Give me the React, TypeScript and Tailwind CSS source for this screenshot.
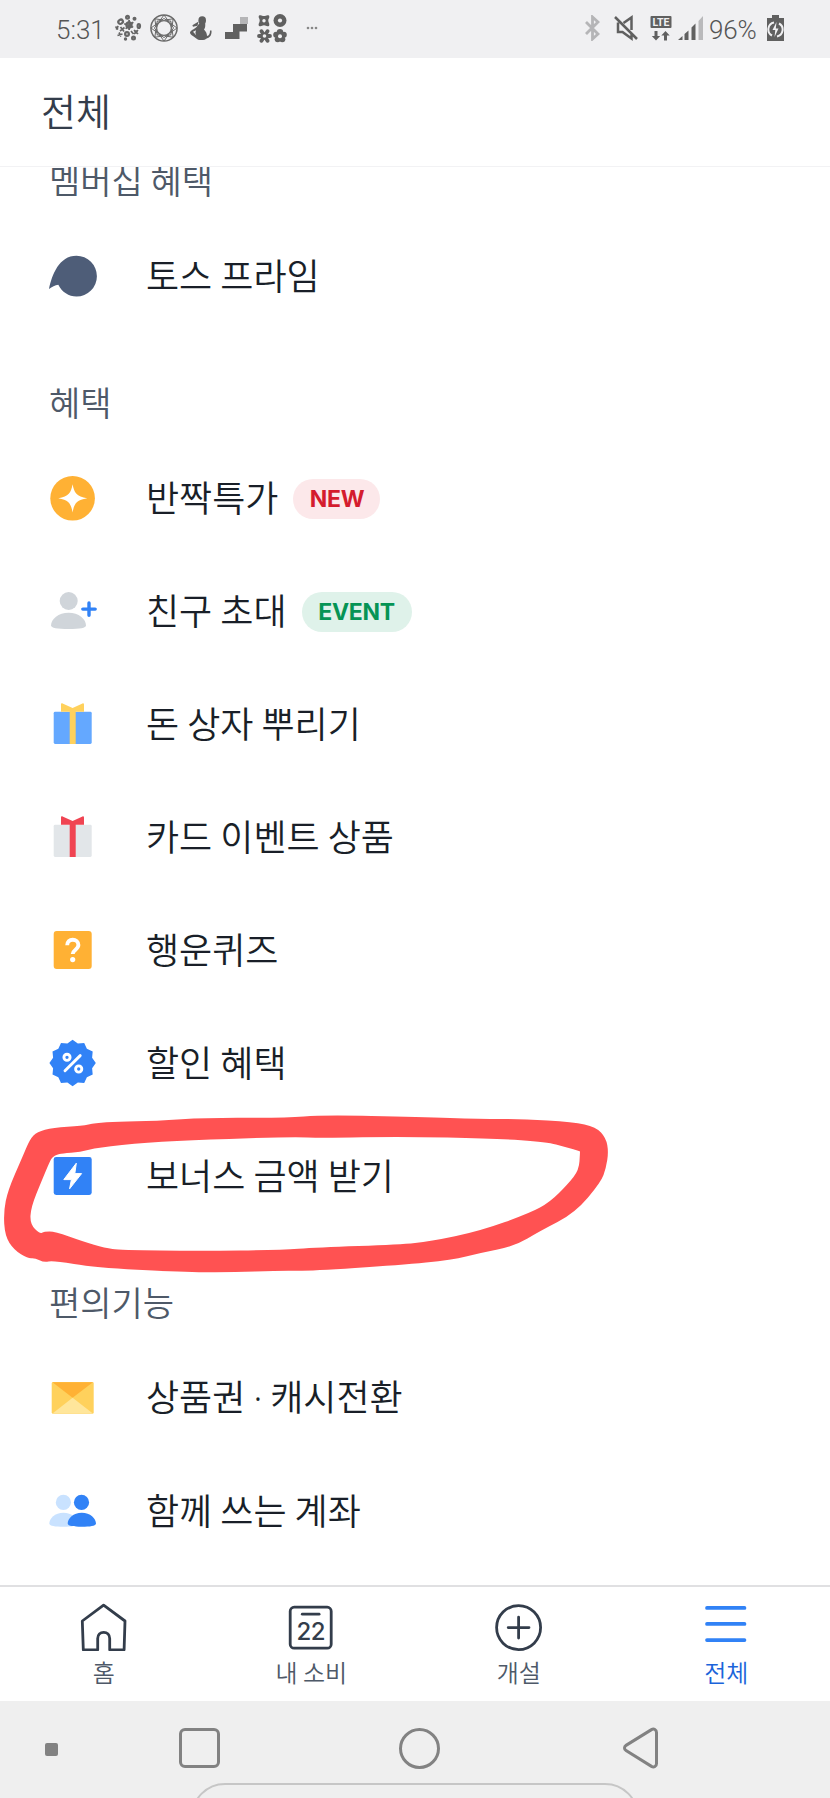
import type { ReactNode } from 'react'

const ICON = 'h-[49px] w-[49px] shrink-0'

function PrimeIcon() {
  return (
    <svg viewBox="0 0 49 49" className={ICON} fill="#4e5d78">
      <path d="M1 38C4 24 11 4.8 28.5 4.8a20.4 20.4 0 0 1 0 40.8c-7.8 0-14.6-4.6-18.2-11.8C7 34.4 4 35.8 1 38z" />
    </svg>
  )
}

function SparkIcon() {
  return (
    <svg viewBox="0 0 49 49" className={ICON}>
      <circle cx="24.6" cy="25.3" r="22.3" fill="#ffb134" />
      <path
        d="M24.6 11.3c1.6 8.6 3.8 12.2 14.6 14-10.8 1.8-13 5.4-14.6 14.1-1.6-8.7-3.8-12.3-14.3-14.1 10.5-1.8 12.7-5.4 14.3-14z"
        fill="#fff"
      />
    </svg>
  )
}

function InviteIcon() {
  return (
    <svg viewBox="0 0 49 49" className={ICON}>
      <circle cx="20.7" cy="15" r="9" fill="#d0d5da" />
      <path d="M3 39.5c0-6.5 7.5-12.8 17.6-12.8S38 33 38 39.5c0 2.4-6 3.5-17.4 3.5S3 41.9 3 39.5z" fill="#d0d5da" />
      <path d="M41 16.9v12.4M34.8 23.1h12.4" stroke="#3182f6" strokeWidth="3.4" strokeLinecap="round" />
    </svg>
  )
}

function GiftIcon({ box, ribbon }: { box: string; ribbon: string }) {
  return (
    <svg viewBox="0 0 49 49" className={ICON}>
      <rect x="5.7" y="12.8" width="38" height="32.2" rx="1.4" fill={box} />
      <path d="M13 5.4c0-.9.8-1.3 1.6-.9l10 4.4 9.9-4.4c.8-.4 1.5 0 1.5.9v7.4h-8.3V45h-6V12.8H13z" fill={ribbon} />
    </svg>
  )
}

function QuizIcon() {
  return (
    <svg viewBox="0 0 49 49" className={ICON}>
      <rect x="5.7" y="6" width="38" height="38" rx="3" fill="#ffb134" />
      <path
        d="M19.2 20.3c0-3.4 2.4-5.6 5.5-5.6s5.7 2.2 5.7 5.4c0 4.5-5.7 4.6-5.7 9"
        fill="none"
        stroke="#fff"
        strokeWidth="3.9"
      />
      <circle cx="24.7" cy="34.6" r="2.6" fill="#fff" />
    </svg>
  )
}

// 12-point starburst
const burst = Array.from({ length: 24 }, (_, i) => {
  const r = i % 2 ? 20.2 : 23.2
  const a = (i * Math.PI) / 12
  return `${24.6 + r * Math.sin(a)},${25 - r * Math.cos(a)}`
}).join(' ')

function DiscountIcon() {
  return (
    <svg viewBox="0 0 49 49" className={ICON}>
      <polygon points={burst} fill="#3182f6" />
      <g fill="none" stroke="#fff" strokeWidth="2.9">
        <circle cx="19" cy="19.3" r="3.1" />
        <circle cx="30.7" cy="31" r="3.1" />
        <path d="M17 32.8l15.2-15.2" strokeLinecap="round" />
      </g>
    </svg>
  )
}

function BonusIcon() {
  return (
    <svg viewBox="0 0 49 49" className={ICON}>
      <rect x="5.7" y="6" width="38" height="38" rx="2.4" fill="#3182f6" />
      <path
        d="M28.3 12.2L15.8 28.6h7.6l-1.8 9.2 12-15.2h-6.8z"
        fill="#fff"
        stroke="#fff"
        strokeWidth="1"
        strokeLinejoin="round"
      />
    </svg>
  )
}

function VoucherIcon() {
  return (
    <svg viewBox="0 0 49 49" className={ICON}>
      <rect x="3.7" y="9" width="42" height="31.8" rx="1.4" fill="#ffd15c" />
      <path d="M4.5 9.2h40.4L24.6 24.8z" fill="#ffb134" />
      <path d="M4.5 40.6h40.4L24.6 24.8z" fill="#ffe69b" />
    </svg>
  )
}

function SharedIcon() {
  return (
    <svg viewBox="0 0 49 49" className={ICON}>
      <g fill="#c9e2ff">
        <circle cx="15.4" cy="16.4" r="7.6" />
        <path d="M1.3 37.6c0-5.2 5.6-10.9 14.1-10.9s14.1 5.7 14.1 10.9c0 2-5 3.2-14.1 3.2S1.3 39.6 1.3 37.6z" />
      </g>
      <g fill="#3182f6">
        <circle cx="33.5" cy="16.4" r="7.6" />
        <path d="M19.7 37.6c0-5.2 5.6-10.9 14.1-10.9S48 32.4 48 37.6c0 2-5 3.2-14.2 3.2s-14.1-1.2-14.1-3.2z" />
      </g>
    </svg>
  )
}

interface Item {
  id: string
  label: ReactNode
  icon: ReactNode
  badge?: ReactNode
}

const groups: { title: string; items: Item[] }[] = [
  {
    title: '멤버십 혜택',
    items: [{ id: 'prime', label: '토스 프라임', icon: <PrimeIcon /> }],
  },
  {
    title: '혜택',
    items: [
      {
        id: 'flash',
        label: '반짝특가',
        icon: <SparkIcon />,
        badge: <Badge className="w-[87px] bg-[#fce8ea] text-[#d41c2e]">NEW</Badge>,
      },
      {
        id: 'invite',
        label: '친구 초대',
        icon: <InviteIcon />,
        badge: <Badge className="w-[110px] bg-[#dff2ea] text-[#059455]">EVENT</Badge>,
      },
      { id: 'box', label: '돈 상자 뿌리기', icon: <GiftIcon box="#64a8ff" ribbon="#ffd15c" /> },
      { id: 'card', label: '카드 이벤트 상품', icon: <GiftIcon box="#e2e6e9" ribbon="#f04452" /> },
      { id: 'quiz', label: '행운퀴즈', icon: <QuizIcon /> },
      { id: 'discount', label: '할인 혜택', icon: <DiscountIcon /> },
      { id: 'bonus', label: '보너스 금액 받기', icon: <BonusIcon /> },
    ],
  },
  {
    title: '편의기능',
    items: [
      {
        id: 'voucher',
        label: (
          <>
            상품권 <span className="font-['Noto_Sans']">·</span> 캐시전환
          </>
        ),
        icon: <VoucherIcon />,
      },
      { id: 'shared', label: '함께 쓰는 계좌', icon: <SharedIcon /> },
    ],
  },
]

function Badge({ className, children }: { className: string; children: ReactNode }) {
  return (
    <span
      className={`ml-[15px] mt-[3px] flex h-10 items-center justify-center rounded-full pt-px font-['Inter'] text-[23px] leading-none font-bold tracking-[-0.3px] ${className}`}
    >
      {children}
    </span>
  )
}

function StatusBar() {
  return (
    <div className="flex h-[58px] shrink-0 items-center bg-[#f0f0f2] pb-[2px] font-['Roboto'] text-[26px] font-light text-[#555]">
      <span className="ml-[56px] mt-[3px] w-[58px] leading-none">5:31</span>
      <svg viewBox="0 0 28 28" className="h-7 w-7" fill="#666">
        <g fill="none" stroke="#666" strokeWidth="2.2">
          <ellipse cx="6.6" cy="7.8" rx="2.4" ry="2" transform="rotate(-35 6.6 7.800)" />
          <circle cx="15" cy="11" r="2.6" />
          <circle cx="13" cy="20" r="1.9" />
          <circle cx="13.5" cy="3.2" r="1.4" />
          <ellipse cx="24.8" cy="12" rx="1.2" ry="2" />
          <circle cx="19.5" cy="24" r="1.4" />
        </g>
        <path d="M14.200 6h1.800v10h-1.800zM10.500 9l9 3.500-.6 1.600-9-3.500zM18.500 7.600l1.400 1.100-7.500 6.600-1.400-1.100z" />
        <circle cx="20.5" cy="4.8" r="2" />
        <circle cx="22" cy="18" r="1.8" />
        <path d="M20 16l4 4M24 16l-4 4M6.500 13l3.500 4.500M10.500 13.500l-4.500 3.500M17 17l2.500 3M5 18.500l2 4M3.500 21.500l5-1.500M1.500 12.500l2.500 3M4.200 12l-2 3.500" stroke="#666" strokeWidth="1.7" />
        <circle cx="11.500" cy="25" r="1.700" />
      </svg>
      <svg viewBox="0 0 28 28" className="ml-2 h-7 w-7" fill="none" stroke="#6a6a6a">
        <circle cx="14" cy="14" r="13.1" strokeWidth="1.500" />
        <circle cx="14" cy="14" r="7.400" strokeWidth="1.300" />
        {[0, 45, 90, 135, 180, 225, 270, 315].map((a) => (
          <path key={a} d="M14 1l4.800 6.500L14 4.500 9.200 7.500z" strokeWidth="1" transform={`rotate(${a} 14 14)`} />
        ))}
      </svg>
      <svg viewBox="0 0 22 25" className="ml-3 h-[25px] w-[22px]" fill="#5f5f5f">
        <ellipse cx="12.2" cy="4.4" rx="3.8" ry="4.2" />
        <path d="M9.200 7.500h6c.2 2.500 0 4.500-1.200 6 2.200 2.200 3 4.500 3 6.500 2.200-.4 3-2.200 3-5.500h1.500c.4 4-1.300 7.200-4.500 7.700-2.200 2.500-9 2.500-11 0C3.500 20.500 0 18.500 0 16.600s4.500-3.500 6.500-5.600z" />
        <path d="M8.600 5.600L2.400 9.300l.6 1.500 4.500-1z" />
        <path d="M3 15.800l3-1.600-.6 2.800.8 2.200z" fill="#f0f0f2" />
      </svg>
      <svg viewBox="0 0 23 22" className="ml-[13px] h-[22px] w-[23px]">
        <path d="M15 0h8v7h-8z" fill="#b5b5b7" />
        <path d="M8 7h14v7.500H14.500V22H0v-7h8z" fill="#606060" />
      </svg>
      <svg viewBox="0 0 30 29" className="ml-[9px] h-[29px] w-[30px]" fill="#606060">
        <path d="M2 1.500C4.500.5 5 2 7 2s2.500-1.500 5-.5c1 2.500-.7 3-.7 5s1.700 3 .7 5.500c-2.500 1-3-.7-5-.7s-2.500 1.700-5 .7c-1-2.500.7-3 .7-5.500S1 4 2 1.500z" />
        <circle cx="23" cy="6.5" r="6.500" />
        <g stroke="#606060" strokeWidth="3.800" strokeLinecap="round">
          <path d="M7.500 22L4.500 17.200M7.500 22L10.500 17.200M7.500 22H13M7.500 22l3 4.800M7.500 22l-3 4.800M7.500 22H2" />
        </g>
        <circle cx="23" cy="18.200" r="3.200" />
        <circle cx="26.800" cy="20.800" r="3" />
        <circle cx="25.300" cy="25.200" r="3" />
        <circle cx="20.700" cy="25.200" r="3" />
        <circle cx="19.200" cy="20.800" r="3" />
        <g fill="#f0f0f2">
          <circle cx="7" cy="6.700" r="1.700" />
          <circle cx="23" cy="6.500" r="2.100" />
          <circle cx="7.500" cy="22" r="1.800" />
          <circle cx="23" cy="22.200" r="2" />
        </g>
      </svg>
      <svg viewBox="0 0 12 4" className="ml-[19px] h-1 w-3" fill="#888">
        <circle cx="2" cy="2" r="1.300" />
        <circle cx="6" cy="2" r="1.300" />
        <circle cx="10" cy="2" r="1.300" />
      </svg>

      <div className="ml-auto mr-[46px] flex items-center">
        <svg viewBox="0 0 15 26" className="h-[26px] w-[15px]" fill="none" stroke="#b5b5b7" strokeWidth="2.800">
          <path d="M1 7l12 12-5.500 5V2L13 7 1 19" />
        </svg>
        <svg viewBox="0 0 24 26" className="ml-[14px] h-[26px] w-6" fill="none" stroke="#606060" strokeWidth="2.500">
          <path d="M1 2l22 22M4 7.500v9.500h4.500l9 6.500V19M9.500 8L17.500 2.500V15" />
        </svg>
        <svg viewBox="0 0 22 26" className="ml-3 h-[26px] w-[22px]">
          <rect x=".5" y="1" width="21" height="12" rx="1" fill="#606060" />
          <text x="11" y="11" textAnchor="middle" fill="#f0f0f2" fontSize="10.500" fontWeight="700" fontFamily="Roboto">
            LTE
          </text>
          <path d="M4.500 16h3v5h2.700L6 25.500 1.800 21h2.700zM14 25.500h3v-5h2.700L15.500 16l-4.200 4.500H14z" fill="#606060" />
        </svg>
        <svg viewBox="0 0 25 25" className="ml-[6px] h-[25px] w-[25px]">
          <path d="M0 24l4.500-4v4zM6.500 18l4-3.500V24h-4zM13.500 11.500l4-4V24h-4z" fill="#606060" />
          <path d="M20.500 5L25 0v24h-4.500z" fill="#b9b9bb" />
        </svg>
        <span className="ml-[6px] mt-[3px] w-[58px] whitespace-nowrap leading-none tracking-[-0.2px]">96%</span>
        <svg viewBox="0 0 17 26" className="h-[26px] w-[17px]">
          <path d="M5 0h7v3h5v23H0V3h5z" fill="#606060" />
          <path d="M7 7.500a7 7 0 0 0-2 13M10 21.500a7 7 0 0 0 2-13" fill="none" stroke="#f0f0f2" strokeWidth="2" />
          <path d="M9.500 7L5.500 15h2.800l-.8 7 4-8.500H8.800z" fill="#f0f0f2" />
        </svg>
      </div>
    </div>
  )
}

const TAB_ICON = 'h-12 w-12'

const tabs = [
  {
    label: '홈',
    icon: (
      <svg viewBox="0 0 48 48" className={TAB_ICON} fill="none" stroke="#333d4b" strokeWidth="2.800" strokeLinejoin="round">
        <path d="M23.600 2.200L45 18l-.9 28.800H29.700V35.500c0-3.700-2.500-6.200-6-6.200s-6 2.500-6 6.200v11.300H3.300L2.300 18z" />
      </svg>
    ),
  },
  {
    label: '내 소비',
    icon: (
      <svg viewBox="0 0 48 48" className={TAB_ICON} fill="none" stroke="#333d4b" strokeWidth="2.800" strokeLinecap="round">
        <rect x="3.200" y="4.200" width="41" height="41" rx="4" />
        <path d="M15.300 11.200h16.800" />
        <text x="23.800" y="37.200" textAnchor="middle" fill="#333d4b" stroke="none" fontSize="24" fontWeight="500" fontFamily="Inter" letterSpacing="-.5">
          22
        </text>
      </svg>
    ),
  },
  {
    label: '개설',
    icon: (
      <svg viewBox="0 0 48 48" className={TAB_ICON} fill="none" stroke="#333d4b" strokeWidth="2.800" strokeLinecap="round">
        <circle cx="23.600" cy="24.600" r="22" />
        <path d="M23.600 14.200v20.800M13.200 24.600h20.800" />
      </svg>
    ),
  },
  {
    label: '전체',
    active: true,
    icon: (
      <svg viewBox="0 0 48 48" className={TAB_ICON} stroke="#3182f6" strokeWidth="3.700" strokeLinecap="round">
        <path d="M5 4.900h37.500M5 20.900h37.500M5 37.100h37.500" />
      </svg>
    ),
  },
]

function TabBar() {
  return (
    <nav className="grid h-[116px] shrink-0 grid-cols-4 border-t-2 border-[#e0e0e2] bg-white pt-4">
      {tabs.map((tab) => (
        <div key={tab.label} className="flex flex-col items-center">
          {tab.icon}
          <span className={`mt-[3px] text-[24px] leading-9 font-[350] ${tab.active ? 'text-[#1b64da]' : 'text-[#4e5968]'}`}>
            {tab.label}
          </span>
        </div>
      ))}
    </nav>
  )
}

function SystemNav() {
  return (
    <div className="h-[97px] shrink-0 overflow-hidden bg-[#efefef]">
      <div className="flex h-[82px] items-center pt-3">
        <div className="ml-[45px] mt-[2px] h-[13px] w-[13px] rounded-[2px] bg-[#828282]" />
        <div className="ml-[121px] h-10 w-[41px] rounded-[6px] border-[3px] border-[#828282]" />
        <div className="ml-[179px] h-[41px] w-[41px] rounded-full border-[3px] border-[#828282]" />
        <svg viewBox="0 0 38 42" className="ml-[182px] h-[42px] w-[38px]" fill="none" stroke="#828282" strokeWidth="3">
          <path d="M29.500 2.600L4 18.400c-2 1.300-2 3.900 0 5.200l25.500 15.800c2.400 1.300 5-.1 5-3V5.600c0-2.900-2.600-4.300-5-3z" />
        </svg>
      </div>
      <div className="ml-[191px] h-[68px] w-[448px] rounded-full border-2 border-[#c6c6c6]" />
    </div>
  )
}

const outer =
  '30,1139 37,1132 53,1127.5 82,1126 95,1123 118,1121.5 155,1121 208,1117.5 285,1118 323,1115 420,1117 480,1119 522,1119 573,1122 596,1127 606,1138 608.5,1152 606,1168 601,1182 575,1213 540,1231 515,1246 480,1253 452,1260 400,1265 310,1271 280,1270.5 230,1272.5 180,1272 95,1267.5 53,1260.5 44,1262.5 35,1258 28,1258.5 14,1250 5,1236 3.5,1212 8,1190 22,1158'
const inner =
  '98,1147.5 146,1142.5 208,1139.5 290,1137 325,1138 400,1136.5 495,1138.5 547,1142 565,1147 580,1151 580,1152 579,1170 568,1184 550,1202 530,1213 480,1231 430,1241.5 400,1244.5 317,1247.5 280,1250 200,1251 120,1250 105,1248 83,1241.5 55,1231.5 44,1231.5 40,1234 30,1224 31,1207 42,1180 50,1161 52.5,1157 57,1154.5 62,1153.5 80,1152'

// Rounds a closed point list through the midpoints of its edges
function smooth(points: string) {
  const p = points.split(' ').map((s) => s.split(',').map(Number))
  const mid = (i: number) => {
    const a = p[i % p.length]
    const b = p[(i + 1) % p.length]
    return `${(a[0] + b[0]) / 2} ${(a[1] + b[1]) / 2}`
  }
  return `M${mid(p.length - 1)}` + p.map((q, i) => `Q${q[0]} ${q[1]} ${mid(i)}`).join('') + 'Z'
}

export default function App() {
  return (
    <div className="relative flex h-[1798px] w-[830px] flex-col overflow-hidden bg-white font-['Noto_Sans_CJK_KR',sans-serif]">
      <StatusBar />
      <header className="flex h-[109px] shrink-0 items-center border-b border-[#f2f2f4] pb-[4px] pl-[41px]">
        <h1 className="text-[38px] leading-[56px] font-[350] text-[#333d4b]">전체</h1>
      </header>

      <main className="min-h-0 flex-1 overflow-hidden">
        <div className="-mt-[57px]">
          {groups.map((group) => (
            <section key={group.title}>
              <h2 className="h-[109px] pl-[49px] pt-[45px] text-[34px] leading-[50px] font-[350] text-[#4e5968]">{group.title}</h2>
              {group.items.map((item) => (
                <div key={item.id} className="flex h-[113px] items-center pl-12">
                  {item.icon}
                  <span className="-mt-[3px] ml-[49px] text-[36px] leading-[52px] font-[350] text-[#191f28]">{item.label}</span>
                  {item.badge}
                </div>
              ))}
            </section>
          ))}
        </div>
      </main>

      <TabBar />
      <SystemNav />

      {/* hand-drawn marker around the bonus row */}
      <svg viewBox="0 0 830 1798" className="pointer-events-none absolute inset-0 h-full w-full">
        <path d={smooth(outer) + smooth(inner)} fill="#ff5252" fillRule="evenodd" />
      </svg>
    </div>
  )
}
